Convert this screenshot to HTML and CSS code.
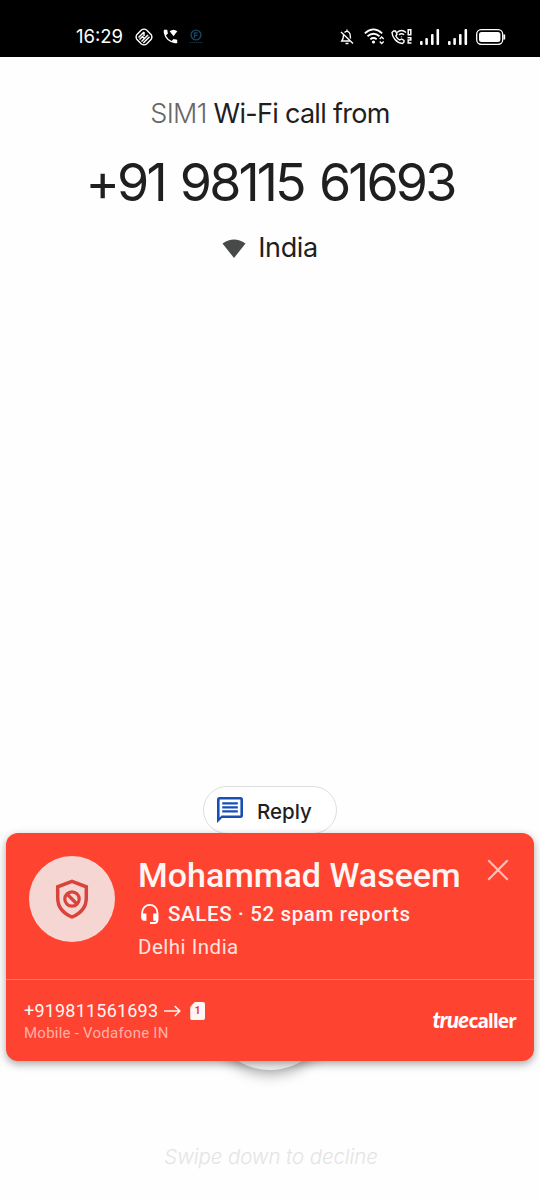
FILE: index.html
```html
<!DOCTYPE html>
<html lang="en">
<head>
<meta charset="utf-8">
<title>Incoming call</title>
<link rel="stylesheet" href="styles.css">
</head>
<body>
<div class="screen">
  <header class="status">
    <span class="clock">16:29</span>
    <svg class="s-rotate" width="18" height="18" viewBox="0 0 18 18" fill="none" stroke="#fff" stroke-width="1.400"><path d="M6.400 2 2 6.400Q.2 9 2 11.600L6.400 16Q9 17.800 11.600 16L16 11.600Q17.800 9 16 6.400L11.600 2Q9 .2 6.400 2Z"/><path d="M3.500 9.500 9 4M8.300 15 14.500 8.800M4.500 11.500l3-3 2 2 3.500-3.500M9 4v4M6.500 13.500l3-3" stroke-width="1.500"/></svg>
    <svg class="s-call" width="15" height="15" viewBox="0 0 15 15" fill="#fff"><path d="M1 .8h3.200l.7 3.600-2 2q1.900 3.800 5.700 5.700l2-2 3.600.7V14Q13 14.500 11 14 2.500 12 .8 4 .5 2 1 .8Z"/><path d="M6.700 2.300Q10.500-.7 14.300 2.300L10.500 7.300Z"/></svg>
    <svg class="s-app" width="14" height="15" viewBox="0 0 14 15" fill="none" stroke="#164765"><circle cx="7" cy="6" r="4.900" stroke-width="1.400"/><path d="M5.500 9V3.800h3.300M5.500 6.300h3" stroke-width="1.300"/><path d="M.5 13.500h13" stroke="#203039" stroke-dasharray="1.500 .5"/></svg>
    <span class="gap"></span>
    <svg class="s-bell" width="14" height="16" viewBox="0 0 14 16" fill="none" stroke="#fff" stroke-width="1.400"><path d="M4.500 3.500Q6.700 1.400 9 3.200 10.300 4.200 10.400 8v1.500M3.600 5.500Q3.400 10 1.800 12H10M7 .5v1.800M5.500 14.500h3M1 3l12 11.500"/></svg>
    <svg class="s-wifi" width="21" height="17" viewBox="0 0 21 17" fill="none" stroke="#fff" stroke-width="1.800"><path d="M.8 5.300Q9.500-2.500 18.200 5.300M3.500 8.300q6-5 12 0M6.300 11.200q3.200-2.500 6.400 0"/><circle cx="9.500" cy="14" r="1.600" fill="#fff" stroke="none"/><path d="m15.700 11 2-2 2 2m-4 2.500 2 2 2-2" stroke-width="1.300"/></svg>
    <svg class="s-volte" width="22" height="17" viewBox="0 0 22 17" fill="none" stroke="#fff" stroke-width="1.400"><path d="M2.500 3 1 4.500Q1 8 4 11.500T11.500 15.500L13 14V12.500L10.500 11 8.700 12Q6 10.500 4.800 8L6 6.200 4.500 3Z"/><path d="M6 4.500q4.500-4 9 0M8 6.800q2.500-2 5 0M10.500 8.500v.8"/><path d="M17.200 1.700h2.600v5h-2.600zM16.500 9.700h3.300v2.400h-2.600v3h3.300" stroke-width="1.500"/></svg>
    <svg class="s-sig" width="20" height="16" viewBox="0 0 20 16" fill="#fff"><rect y="12" width="2.600" height="4" rx="1"/><rect x="5.300" y="9" width="2.600" height="7" rx="1"/><rect x="11" y="5" width="2.600" height="11" rx="1"/><rect x="16.500" y="0" width="2.600" height="16" rx="1"/></svg>
    <svg class="s-sig2" width="20" height="16" viewBox="0 0 20 16" fill="#fff"><rect y="12" width="2.600" height="4" rx="1"/><rect x="5.300" y="9" width="2.600" height="7" rx="1"/><rect x="11" y="5" width="2.600" height="11" rx="1"/><rect x="16.500" y="0" width="2.600" height="16" rx="1"/></svg>
    <svg class="s-batt" width="30" height="16" viewBox="0 0 30 16"><rect x=".7" y=".7" width="26" height="14.600" rx="4.500" fill="none" stroke="#fff" stroke-width="1.300"/><rect x="3" y="3" width="21.400" height="10" rx="2.500" fill="#fff"/><path d="M28.300 5.500v5" stroke="#fff" stroke-width="1.800"/></svg>
  </header>

  <main class="caller">
    <p class="via"><span class="sim">SIM1</span> Wi-Fi call from</p>
    <h1 class="number">+91 98115 61693</h1>
    <p class="place"><svg width="24" height="19" viewBox="0 0 24 19" fill="#474a48"><path d="M.5 4.500Q12-3.500 23.500 4.500L12 19Z"/></svg><span>India</span></p>
  </main>

  <button class="reply">
    <svg width="26" height="26" viewBox="0 0 26 26"><path fill="#174fb5" fill-rule="evenodd" d="M2.500 0h21Q26 0 26 2.500v16Q26 21 23.500 21H5L0 26V2.500Q0 0 2.500 0ZM2.600 2.600v18L4.600 18.400H23.400V2.600ZM5.200 5.200h15.600v2.400H5.200ZM5.200 9.200h15.600v2.400H5.200ZM5.200 13.200h15.600v2.400H5.200Z"/></svg>
    <span class="reply-text">Reply</span>
  </button>

  <section class="card">
    <div class="top">
      <div class="avatar"><svg width="34" height="41" viewBox="0 0 34 41" fill="none" stroke="#d8443c"><path d="M17 2.300 31.300 7.800V19Q31.300 32 17 38 2.700 32 2.700 19V7.800Z" stroke-width="3.500"/><circle cx="17" cy="20" r="7.200" stroke-width="3.200"/><path d="m12 15 10 10" stroke-width="3.200"/></svg></div>
      <div class="info">
        <h2 class="name">Mohammad Waseem</h2>
        <p class="spam"><svg width="18" height="20" viewBox="0 0 18 20"><path d="M1.200 14V8.500a7.600 7.600 0 0 1 15.200 0V16q0 3-3 3H9" fill="none" stroke="#fff" stroke-width="1.800"/><path d="M.4 9.500h5v7.300H3Q.4 16.800.4 14ZM12.200 9.500h5v7.300h-5Z" fill="#fff"/></svg><span>SALES · 52 spam reports</span></p>
        <p class="city">Delhi India</p>
      </div>
      <svg class="close" width="22" height="22" viewBox="0 0 22 22" fill="none" stroke="#ffc0b8" stroke-width="2.200"><path d="m1.300 1.300 19.400 19.400M20.700 1.300 1.300 20.700"/></svg>
    </div>
    <div class="bottom">
      <div>
        <p class="line"><span>+919811561693</span><svg class="arrow" width="17" height="12" viewBox="0 0 17 12" fill="none" stroke="#fff0ed" stroke-width="1.700"><path d="M0 6h15.500M10.700 1l5 5-5 5"/></svg><span class="simcard">1</span></p>
        <p class="carrier">Mobile - Vodafone IN</p>
      </div>
      <div class="brand"><span class="true">true</span><span class="caller-word">caller</span></div>
    </div>
  </section>

  <div class="knob"></div>
  <p class="hint">Swipe down to decline</p>
</div>
</body>
</html>
```

FILE: styles.css
```css
* { box-sizing: border-box; }
body { margin: 0; background: #fff; }
p, h1, h2 { margin: 0; }
svg { display: block; flex: none; }

.screen {
  width: 540px;
  height: 1200px;
  overflow: hidden;
  background: #fefefe;
  font-family: Inter, Roboto, sans-serif;
  color: #1f1f1f;
  display: flex;
  flex-direction: column;
  align-items: center;
}

.status {
  width: 540px;
  height: 57px;
  flex: none;
  background: #000;
  color: #fff;
  display: flex;
  align-items: center;
  padding: 16px 34px 0 76px;
}
.clock { width: 59px; font-size: 18.500px; line-height: 22px; margin-top: -2px; white-space: nowrap; }
.s-call { margin-left: 10px; }
.s-app { margin-left: 11px; }
.gap { flex: 1; }
.s-wifi { margin-left: 10px; }
.s-volte { margin-left: 6px; }
.s-sig { margin-left: 7px; }
.s-sig2 { margin-left: 8px; }
.s-batt { margin-left: 8px; }

.caller {
  padding-top: 39px;
  height: 729px;
  flex: none;
  text-align: center;
  white-space: nowrap;
}
.via { font-size: 27px; line-height: 36px; letter-spacing: -.7px; }
.sim { color: #666; font-weight: 300; }
.number {
  margin-top: 19px;
  font-size: 52px;
  line-height: 64px;
  font-weight: 380;
  letter-spacing: -2.900px;
  word-spacing: 3.500px;
}
.place {
  margin-top: 15px;
  font-size: 27px;
  line-height: 36px;
  letter-spacing: -.4px;
  display: flex;
  justify-content: center;
  align-items: center;
  gap: 12px;
}

.reply {
  width: 134px;
  height: 48px;
  flex: none;
  border: 1.500px solid #dedede;
  border-radius: 24px;
  background: #fff;
  padding: 0 0 0 13px;
  display: flex;
  align-items: center;
  gap: 14px;
  font: 450 20.500px/44px Inter, sans-serif;
  color: #1f1f1f;
}
.reply-text { padding-top: 3px; }

.card {
  position: relative;
  z-index: 1;
  width: 528px;
  height: 228px;
  flex: none;
  margin-top: -1px;
  border-radius: 12px;
  background: #ff4331;
  color: #fff5f3;
  font-family: Roboto, sans-serif;
  box-shadow: 0 3px 9px rgba(0, 0, 0, .35);
}
.top {
  height: 147px;
  border-bottom: 1.500px solid #ff7666;
  display: flex;
  align-items: flex-start;
  padding: 23px 25px 0 23px;
}
.avatar {
  width: 86px;
  height: 86px;
  border-radius: 50%;
  background: #f6d6d3;
  display: flex;
  align-items: center;
  justify-content: center;
}
.info { flex: 1; padding-left: 23px; margin-top: -1px; white-space: nowrap; }
.name { font-size: 34px; line-height: 40px; font-weight: 500; letter-spacing: 0; }
.spam {
  margin-top: 6px;
  font-size: 20.500px;
  line-height: 26px;
  font-weight: 500;
  letter-spacing: .64px;
  display: flex;
  align-items: center;
  gap: 9px;
  padding-left: 3px;
}
.city { margin-top: 7px; font-size: 20.500px; line-height: 26px; letter-spacing: .5px; color: #ffe4df; }
.close { margin-top: 3px; }

.bottom {
  height: 81px;
  display: flex;
  justify-content: space-between;
  padding: 19px 18px 0;
}
.line { display: flex; align-items: center; font-size: 18px; line-height: 24px; letter-spacing: .2px; }
.arrow { margin-left: 6px; }
.simcard {
  margin-left: 9px;
  width: 15px;
  height: 18px;
  border-radius: 2px;
  background: #fff5f3;
  clip-path: polygon(30% 0, 100% 0, 100% 100%, 0 100%, 0 28%);
  color: #e63a2c;
  font: 700 10px/18px Roboto, sans-serif;
  text-align: center;
}
.carrier { font-size: 15px; line-height: 20px; letter-spacing: .24px; color: #ffb1a7; }
.brand { display: flex; align-items: baseline; height: 30px; margin-top: 6px; line-height: 30px; color: #fff; }
.true { font: italic 900 22px/30px Lato, sans-serif; letter-spacing: -.7px; }
.caller-word { font: 700 19px/30px "Noto Sans", sans-serif; letter-spacing: -.8px; }

.knob {
  width: 124px;
  height: 124px;
  flex: none;
  margin-top: -115px;
  border-radius: 50%;
  background: #f3f3f3;
  box-shadow: 0 4px 14px rgba(0, 0, 0, .35);
}
.hint {
  margin-top: 72px;
  padding-left: 2px;
  font-size: 20.500px;
  line-height: 30px;
  letter-spacing: -.1px;
  font-style: italic;
  font-weight: 300;
  color: #e4e4e4;
  white-space: nowrap;
}
```
